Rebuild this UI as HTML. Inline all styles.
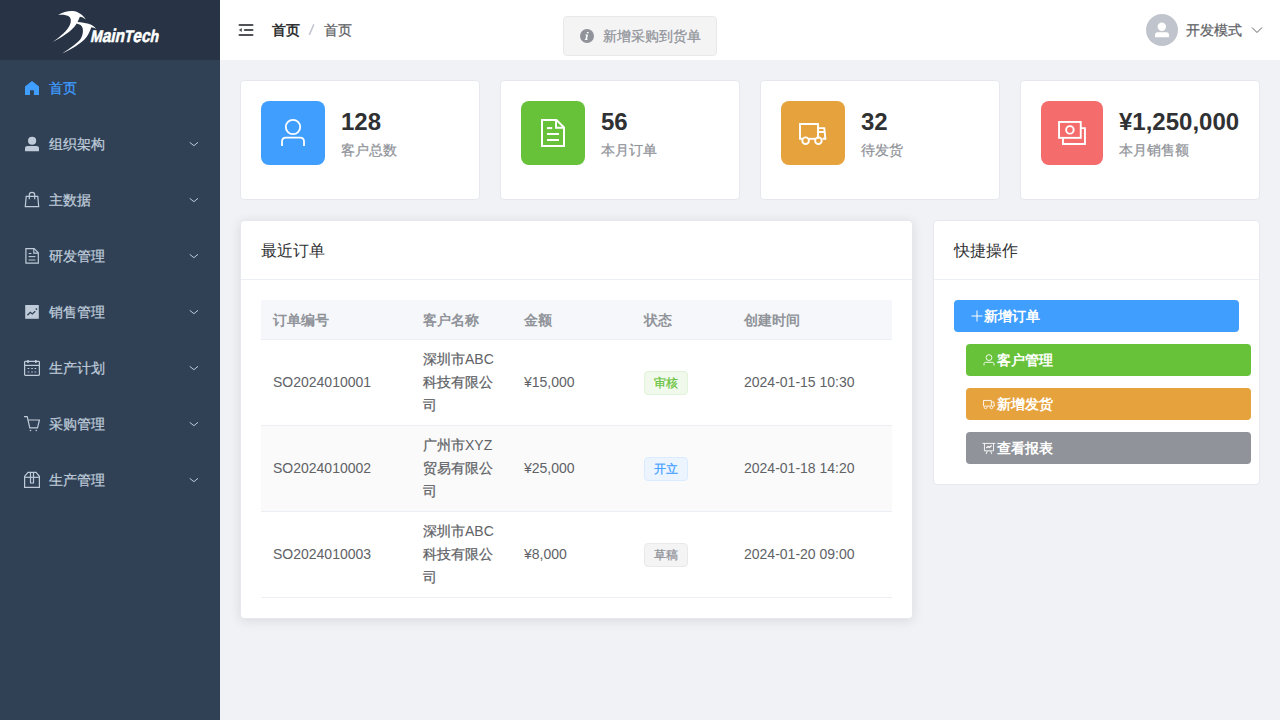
<!DOCTYPE html>
<html><head><meta charset="utf-8">
<style>
*{box-sizing:border-box;margin:0;padding:0}
html,body{width:1280px;height:720px;overflow:hidden}
body{font-family:"Liberation Sans",sans-serif;font-size:14px;color:#606266;background:#f0f2f5;position:relative}
.abs{position:absolute}
#side{position:absolute;left:0;top:0;width:220px;height:720px;background:#304156}
#logo{position:absolute;left:0;top:0;width:220px;height:60px;background:#283445}
.mi{position:absolute;left:0;width:220px;height:56px;color:#bfcbd9}
.mi .ic{position:absolute;left:20px;top:16px;width:24px;height:24px}
.mi .tx{position:absolute;left:49px;top:0;line-height:56px;font-size:14px}
.mi .ar{position:absolute;left:186px;top:22px;width:14px;height:10px}
#head{position:absolute;left:220px;top:0;width:1060px;height:60px;background:#fff}
.card{position:absolute;background:#fff;border:1px solid #e6e8ee;border-radius:4px}
.stat .box{position:absolute;left:20px;top:20px;width:64px;height:64px;border-radius:8px}
.stat .num{position:absolute;left:100px;top:26px;font-size:24px;font-weight:bold;color:#303133;line-height:30px;white-space:nowrap}
.stat .lbl{position:absolute;left:100px;top:59px;font-size:14px;color:#909399;line-height:20px;white-space:nowrap}
.ch{position:absolute;left:0;top:0;right:0;height:59px;border-bottom:1px solid #ebeef5}
.ch>span{position:absolute;left:20px;top:1px;line-height:58px;font-size:16px;color:#303133}
.tbl{position:absolute}
.row{position:absolute;left:0;width:631px;border-bottom:1px solid #ebeef5}
.cell{position:absolute;top:0;padding:0 12px;line-height:23px;display:flex;align-items:center}
.tag{display:inline-block;height:24px;line-height:22px;padding:0 9px;font-size:12px;border:1px solid;border-radius:4px}
.btn{position:absolute;height:32px;border-radius:4px;color:#fff;font-weight:bold;font-size:14px}
.cj{-webkit-text-stroke:0.25px currentColor}
.nb .cj,.btn .cj,.ch .cj{-webkit-text-stroke:0}
</style></head><body>
<div id="side">
  <div id="logo">
    <svg class="abs" style="left:0;top:0" width="220" height="60" viewBox="0 0 220 60">
      <path fill="#fff" d="M58 14.9 C63 12 68 10.8 72.9 11.1 C78 11.5 83 15 85.8 19.5 C84 18 81.5 16.8 79.9 16.7 L77.8 21.5 C75 27 70 33 52.8 42 C61 36 67 31 69.6 25.5 C71.2 22 71.5 18.5 69 16.4 C67 14.8 62 14.5 58 14.9 Z"/>
      <path fill="#fff" d="M76.4 21.9 C82 22 88 23.2 91.7 25 C93.5 26 95 27.3 96.2 28.8 C94.5 28 92.8 27.4 91.3 27.2 C90 31 88 36 84.7 39.3 C80 44 72 49 62.2 53.5 C70 48.5 77 43 80.2 39.5 C83 36 83.3 31 82.6 28.1 C82 25.8 80 24.2 76.4 23.6 Z"/>
      <g transform="translate(90,42.2) skewX(-12) scale(1,1.12)"><text x="0" y="0" font-family="Liberation Sans" font-weight="bold" font-size="15" fill="#fff" stroke="#fff" stroke-width="0.5" textLength="68" lengthAdjust="spacingAndGlyphs">M<tspan font-size="16.5">ain</tspan>T<tspan font-size="16.5">ec</tspan>h</text></g>
    </svg>
  </div>
  <div class="mi" style="top:60px;color:#409eff"><svg class="ic" viewBox="0 0 24 24"><path fill="#409eff" d="M12 5 L19 10.6 V19 H13.9 V14.2 H10 V19 H5 V10.6 Z"/></svg><span class="tx"><span class="cj">首页</span></span></div>
  <div class="mi" style="top:116px"><svg class="ic" viewBox="0 0 24 24"><circle cx="12.1" cy="8.75" r="4.1" fill="#bfcbd9"/><path fill="#bfcbd9" d="M5 16.2 C5 14.8 6 14 7.5 14 H16.5 C18 14 19 14.8 19 16.2 V19.2 H5 Z"/></svg><span class="tx"><span class="cj">组织架构</span></span><svg class="ar" viewBox="0 0 14 10"><path d="M3.7 4.3 L7.9 7.7 L12 4.3" fill="none" stroke="#bfcbd9" stroke-width="1"/></svg></div>
  <div class="mi" style="top:172px"><svg class="ic" viewBox="0 0 24 24"><g fill="none" stroke="#bfcbd9" stroke-width="1.2"><path d="M6.2 8.4 H17.8 L18.7 18.7 H5.3 Z"/><path d="M9.3 11.3 V7 A2.7 2.7 0 0 1 14.7 7 V11.3"/></g></svg><span class="tx"><span class="cj">主数据</span></span><svg class="ar" viewBox="0 0 14 10"><path d="M3.7 4.3 L7.9 7.7 L12 4.3" fill="none" stroke="#bfcbd9" stroke-width="1"/></svg></div>
  <div class="mi" style="top:228px"><svg class="ic" viewBox="0 0 24 24"><g fill="none" stroke="#bfcbd9" stroke-width="1.2"><path d="M5.9 4.6 H14.2 L18.3 8.8 V19.1 H5.9 Z"/><path d="M13.8 4.8 V9.2 H18.2"/></g><g stroke="#bfcbd9" stroke-width="1.1"><path d="M8.6 9.5 H11.4"/><path d="M8.6 12.6 H15.4"/></g><path d="M8.6 16 H15.4" stroke="#9aa6b4" stroke-width="1.3"/></svg><span class="tx"><span class="cj">研发管理</span></span><svg class="ar" viewBox="0 0 14 10"><path d="M3.7 4.3 L7.9 7.7 L12 4.3" fill="none" stroke="#bfcbd9" stroke-width="1"/></svg></div>
  <div class="mi" style="top:284px"><svg class="ic" viewBox="0 0 24 24"><rect x="5.2" y="5" width="13.6" height="13.8" fill="#bfcbd9"/><path d="M7.4 15.2 L10.3 12.3 L12.3 14 L15.3 11.2" fill="none" stroke="#304156" stroke-width="1.3"/><circle cx="16.4" cy="9.1" r="0.9" fill="#304156"/></svg><span class="tx"><span class="cj">销售管理</span></span><svg class="ar" viewBox="0 0 14 10"><path d="M3.7 4.3 L7.9 7.7 L12 4.3" fill="none" stroke="#bfcbd9" stroke-width="1"/></svg></div>
  <div class="mi" style="top:340px"><svg class="ic" viewBox="0 0 24 24"><g fill="none" stroke="#bfcbd9" stroke-width="1.2"><rect x="4.6" y="5.4" width="14.8" height="14" rx="0.8"/><path d="M4.6 9.4 H19.4"/></g><g stroke="#bfcbd9" stroke-width="1.6"><path d="M8 4 V7"/><path d="M15.8 4 V7"/></g><g fill="#bfcbd9"><rect x="7.6" y="12" width="1.7" height="1" /><rect x="11.2" y="12" width="1.7" height="1"/><rect x="14.5" y="12" width="1.7" height="1"/></g><g fill="#8f9bab"><rect x="7.6" y="15.3" width="1.7" height="1.4"/><rect x="11.2" y="15.3" width="1.7" height="1.4"/><rect x="14.5" y="15.3" width="1.7" height="1.4"/></g></svg><span class="tx"><span class="cj">生产计划</span></span><svg class="ar" viewBox="0 0 14 10"><path d="M3.7 4.3 L7.9 7.7 L12 4.3" fill="none" stroke="#bfcbd9" stroke-width="1"/></svg></div>
  <div class="mi" style="top:396px"><svg class="ic" viewBox="0 0 24 24"><g fill="none" stroke="#bfcbd9" stroke-width="1.2"><path d="M4 4.6 H7.2 L9.8 15.9 H17.5 L19.4 8 H8.3"/></g><circle cx="10.5" cy="18.5" r="0.8" fill="#bfcbd9"/><circle cx="16.3" cy="18.5" r="0.8" fill="#bfcbd9"/></svg><span class="tx"><span class="cj">采购管理</span></span><svg class="ar" viewBox="0 0 14 10"><path d="M3.7 4.3 L7.9 7.7 L12 4.3" fill="none" stroke="#bfcbd9" stroke-width="1"/></svg></div>
  <div class="mi" style="top:452px"><svg class="ic" viewBox="0 0 24 24"><g fill="none" stroke="#bfcbd9" stroke-width="1.2"><path d="M4.6 8.3 L8 4.4 H16 L19.4 8.3 V19.4 H4.6 Z"/><path d="M4.6 9.3 H19.4"/><path d="M10.5 4.6 V15 H13.5 V4.6"/></g></svg><span class="tx"><span class="cj">生产管理</span></span><svg class="ar" viewBox="0 0 14 10"><path d="M3.7 4.3 L7.9 7.7 L12 4.3" fill="none" stroke="#bfcbd9" stroke-width="1"/></svg></div>
</div>
<div id="head">
  <svg class="abs" style="left:12px;top:18px" width="28" height="24" viewBox="0 0 28 24">
    <g stroke="#505258" stroke-width="2" stroke-linecap="round"><path d="M7.5 7 H20.5"/><path d="M12.8 12 H20.5"/><path d="M7.5 17 H20.5"/></g>
    <path d="M6.8 12 L9.8 9.9 V14.1 Z" fill="#505258"/>
  </svg>
  <span class="abs nb" style="left:52px;top:0;line-height:60px;font-weight:bold;color:#303133"><span class="cj">首页</span></span>
  <svg class="abs" style="left:86px;top:20px" width="10" height="20" viewBox="0 0 10 20"><path d="M7.9 4.3 L3.3 14.9" stroke="#c0c4cc" stroke-width="1.5"/></svg>
  <span class="abs" style="left:104px;top:0;line-height:60px;color:#606266"><span class="cj">首页</span></span>
  <div class="abs" style="left:343px;top:16px;width:154px;height:40px;background:#f4f4f5;border:1px solid #e9e9eb;border-radius:4px">
    <svg class="abs" style="left:15px;top:11px" width="16" height="16" viewBox="0 0 16 16"><circle cx="8" cy="8" r="7" fill="#909399"/><g transform="translate(-1.1,0.1)"><path d="M9.1 3.9 H10.9 L10.6 5.1 H8.8 Z" fill="#fff"/><path d="M7.4 6.3 H10.1 L9.1 11.1 H9.8 L9.6 12 H6.8 L7 11.1 H7.5 L8.3 7.1 H7.3 Z" fill="#fff"/></g></svg>
    <span class="abs" style="left:39px;top:0;line-height:38px;color:#909399"><span class="cj">新增采购到货单</span></span>
  </div>
  <div class="abs" style="left:926px;top:14px;width:32px;height:32px;border-radius:50%;background:#c0c4cc">
    <svg class="abs" style="left:0;top:0" width="32" height="32" viewBox="0 0 32 32"><circle cx="15.8" cy="12.75" r="4.2" fill="#fff"/><path d="M9 21 C9 19.2 10 18.3 11.5 18.3 H20.5 C22 18.3 23 19.2 23 21 V23.2 H9 Z" fill="#fff"/></svg>
  </div>
  <span class="abs" style="left:966px;top:0;line-height:60px;color:#606266"><span class="cj">开发模式</span></span>
  <svg class="abs" style="left:1028px;top:24px" width="16" height="12" viewBox="0 0 16 12"><path d="M4 3.5 L9 8.5 L14 3.5" fill="none" stroke="#606266" stroke-width="1"/></svg>
</div>
<div class="card stat" style="left:240px;top:80px;width:240px;height:120px"><div class="box" style="background:#409eff"><svg width="64" height="64" viewBox="0 0 64 64"><circle cx="32" cy="26" r="7.2" fill="none" stroke="#fff" stroke-width="1.8"/><path d="M21 45 V40.5 C21 37.8 22.5 36.6 25 36.6 H39 C41.5 36.6 43 37.8 43 40.5 V45" fill="none" stroke="#fff" stroke-width="1.8"/></svg></div><div class="num">128</div><div class="lbl"><span class="cj">客户总数</span></div></div>
<div class="card stat" style="left:500px;top:80px;width:240px;height:120px"><div class="box" style="background:#67c23a"><svg width="64" height="64" viewBox="0 0 64 64"><g fill="none" stroke="#fff" stroke-width="2"><path d="M21 19 H35.5 L43 26.5 V45 H21 Z"/><path d="M35 19.2 V26.8 H42.8"/></g><g stroke="#fff" stroke-width="2"><path d="M26 27.1 H31.2"/><path d="M26 33 H38"/><path d="M26 39 H38"/></g></svg></div><div class="num">56</div><div class="lbl"><span class="cj">本月订单</span></div></div>
<div class="card stat" style="left:760px;top:80px;width:240px;height:120px"><div class="box" style="background:#e6a23c"><svg width="64" height="64" viewBox="0 0 64 64"><g fill="none" stroke="#fff" stroke-width="1.9"><path d="M21.2 37.8 H19 V23 H37 V37.8"/><path d="M27.8 37.8 H34.2"/><path d="M37 27.1 H43.3 L44.4 37.8 H41.5"/><path d="M37 31 H43.8"/><circle cx="24.6" cy="39.7" r="3.3"/><circle cx="37.4" cy="39.7" r="3.3"/></g></svg></div><div class="num">32</div><div class="lbl"><span class="cj">待发货</span></div></div>
<div class="card stat" style="left:1020px;top:80px;width:240px;height:120px"><div class="box" style="background:#f56c6c;width:62px"><svg width="62" height="64" viewBox="1 0 62 64"><g fill="none" stroke="#fff" stroke-width="1.9"><rect x="19.05" y="20.95" width="21.7" height="15.9"/><path d="M40.75 27.15 H44.95 V43.05 H22.95 V36.85"/><circle cx="29.9" cy="28.9" r="3.75"/></g></svg></div><div class="num" style="left:98px">¥1,250,000</div><div class="lbl" style="left:98px"><span class="cj">本月销售额</span></div></div>
<div class="card" style="left:240px;top:220px;width:673px;height:399px;box-shadow:0 2px 12px 0 rgba(0,0,0,.1)">
  <div class="ch"><span><span class="cj">最近订单</span></span></div>
  <div class="tbl" style="left:20px;top:79px;width:631px;height:298px">
    <div class="row nb" style="top:0;height:40px;background:#f5f7fa;font-weight:bold;color:#909399">
      <div class="cell" style="left:0;top:1px;height:39px"><div><span class="cj">订单编号</span></div></div>
      <div class="cell" style="left:150px;top:1px;height:39px"><div><span class="cj">客户名称</span></div></div>
      <div class="cell" style="left:251px;top:1px;height:39px"><div><span class="cj">金额</span></div></div>
      <div class="cell" style="left:371px;top:1px;height:39px"><div><span class="cj">状态</span></div></div>
      <div class="cell" style="left:471px;top:1px;height:39px"><div><span class="cj">创建时间</span></div></div>
    </div>
    <div class="row" style="top:40px;height:86px;background:#fff">
      <div class="cell" style="left:0;height:85px"><div>SO2024010001</div></div>
      <div class="cell" style="left:150px;height:85px"><div><span class="cj">深圳市</span>ABC<br><span class="cj">科技有限公</span><br><span class="cj">司</span></div></div>
      <div class="cell" style="left:251px;height:85px"><div>¥15,000</div></div>
      <div class="cell" style="left:371px;height:85px"><div><span class="tag" style="color:#67c23a;background:#f0f9eb;border-color:#e1f3d8"><span class="cj">审核</span></span></div></div>
      <div class="cell" style="left:471px;height:85px"><div>2024-01-15 10:30</div></div>
    </div>
    <div class="row" style="top:126px;height:86px;background:#fafafa">
      <div class="cell" style="left:0;height:85px"><div>SO2024010002</div></div>
      <div class="cell" style="left:150px;height:85px"><div><span class="cj">广州市</span>XYZ<br><span class="cj">贸易有限公</span><br><span class="cj">司</span></div></div>
      <div class="cell" style="left:251px;height:85px"><div>¥25,000</div></div>
      <div class="cell" style="left:371px;height:85px"><div><span class="tag" style="color:#409eff;background:#ecf5ff;border-color:#d9ecff"><span class="cj">开立</span></span></div></div>
      <div class="cell" style="left:471px;height:85px"><div>2024-01-18 14:20</div></div>
    </div>
    <div class="row" style="top:212px;height:86px;background:#fff">
      <div class="cell" style="left:0;height:85px"><div>SO2024010003</div></div>
      <div class="cell" style="left:150px;height:85px"><div><span class="cj">深圳市</span>ABC<br><span class="cj">科技有限公</span><br><span class="cj">司</span></div></div>
      <div class="cell" style="left:251px;height:85px"><div>¥8,000</div></div>
      <div class="cell" style="left:371px;height:85px"><div><span class="tag" style="color:#909399;background:#f4f4f5;border-color:#e9e9eb"><span class="cj">草稿</span></span></div></div>
      <div class="cell" style="left:471px;height:85px"><div>2024-01-20 09:00</div></div>
    </div>
  </div>
</div>
<div class="card" style="left:933px;top:220px;width:327px;height:265px">
  <div class="ch"><span><span class="cj">快捷操作</span></span></div>
  <div class="btn" style="left:20px;top:79px;width:285px;background:#409eff">
    <svg class="abs" style="left:17px;top:10px" width="12" height="12" viewBox="0 0 12 12"><path d="M6 0.5 V11.5 M0.5 6 H11.5" stroke="#fff" stroke-width="1"/></svg>
    <span class="abs" style="left:30px;top:0;line-height:32px"><span class="cj">新增订单</span></span>
  </div>
  <div class="btn" style="left:32px;top:123px;width:285px;background:#67c23a">
    <svg class="abs" style="left:17px;top:10px" width="12" height="12" viewBox="0 0 12 12"><g fill="none" stroke="#fff" stroke-width="0.9"><circle cx="6" cy="3.6" r="2.9"/><path d="M1 11.5 V9.8 C1 8.8 1.6 8.3 2.6 8.3 H9.4 C10.4 8.3 11 8.8 11 9.8 V11.5"/></g></svg>
    <span class="abs" style="left:31px;top:0;line-height:32px"><span class="cj">客户管理</span></span>
  </div>
  <div class="btn" style="left:32px;top:167px;width:285px;background:#e6a23c">
    <svg class="abs" style="left:16px;top:10px" width="14" height="12" viewBox="0 0 14 12"><g fill="none" stroke="#fff" stroke-width="0.9"><path d="M2.1 8.05 H1.55 V2.45 H9.3 V8.05"/><path d="M5.1 8.05 H7.9"/><path d="M9.3 3.95 H11.8 L12.4 8.05 H10.9"/><circle cx="3.6" cy="9.3" r="1.4"/><circle cx="9.4" cy="9.3" r="1.4"/></g></svg>
    <span class="abs" style="left:31px;top:0;line-height:32px"><span class="cj">新增发货</span></span>
  </div>
  <div class="btn" style="left:32px;top:211px;width:285px;background:#909399">
    <svg class="abs" style="left:16px;top:10px" width="14" height="13" viewBox="0 0 14 13"><g fill="none" stroke="#fff" stroke-width="0.9"><path d="M0.5 1.4 H13.3"/><path d="M2.45 1.4 V8.85 H11.55 V1.4"/><path d="M5.25 9 L4.1 12.1 M8.75 9 L9.8 12.1"/><path d="M4.3 6 L6 4.5 L7.5 5.5 L9.6 3.5" stroke-width="1.1"/></g></svg>
    <span class="abs" style="left:31px;top:0;line-height:32px"><span class="cj">查看报表</span></span>
  </div>
</div>
</body></html>
